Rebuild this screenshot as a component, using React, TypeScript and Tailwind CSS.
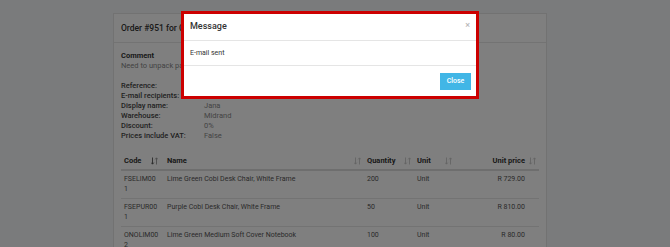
import _React from "react";

const rows = [
  { code: ["FSELIM00", "1"], name: "Lime Green Cobi Desk Chair, White Frame", qty: "200", unit: "Unit", price: "R 729.00" },
  { code: ["FSEPUR00", "1"], name: "Purple Cobi Desk Chair, White Frame", qty: "50", unit: "Unit", price: "R 810.00" },
  { code: ["ONOLIM00", "2"], name: "Lime Green Medium Soft Cover Notebook", qty: "100", unit: "Unit", price: "R 80.00" },
];

const details = [
  ["Reference:", ""],
  ["E-mail recipients:", ""],
  ["Display name:", "Jana"],
  ["Warehouse:", "Midrand"],
  ["Discount:", "0%"],
  ["Prices include VAT:", "False"],
];

const SortIcon = ({ active }: { active?: boolean }) => (
  <svg width="7" height="8" viewBox="0 0 7 8" className="shrink-0">
    {/* down arrow */}
    <path d="M1.5 0.5V7M0.2 5.6L1.5 7.2L2.8 5.6" fill="none" stroke={active ? "#555" : "#c8c8c8"} strokeWidth="0.9" />
    {/* up arrow */}
    <path d="M5.5 7.5V1M4.2 2.4L5.5 0.8L6.8 2.4" fill="none" stroke={active ? "#999" : "#c8c8c8"} strokeWidth="0.9" />
  </svg>
);

const App = () => {
  return (
    <div className="relative h-[247px] w-[670px] overflow-hidden bg-[#f5f6f8] font-['Roboto',sans-serif] text-[#333]">
      {/* Order card */}
      <div className="ml-[113px] mt-[13px] w-[434px] border border-[#e4e4e4] bg-white">
        <div className="flex h-[29px] items-center border-b border-[#e6e6e6] px-[7px] text-[8.5px] font-medium">
          Order #951 for C
        </div>
        <div className="px-[7px] pt-[8px] text-[7.5px] leading-[10px]">
          <div className="font-bold">Comment</div>
          <div className="text-[#888]">Need to unpack pallets on arrival</div>
          <div className="mt-[10px] grid grid-cols-[83px_1fr]">
            {details.map(([label, value]) => (
              <div key={label} className="contents">
                <div className="font-medium text-[#444]">{label}</div>
                <div className="text-[#888]">{value}</div>
              </div>
            ))}
          </div>
          {/* Table */}
          <div className="mt-[12px] w-[418px]">
            <div className="grid h-[18px] grid-cols-[43px_200px_50px_41px_84px] items-center border-b-2 border-[#ddd] font-bold text-[#333]">
              <div className="flex items-center justify-between px-[3px] pr-[6px]">
                Code <SortIcon active />
              </div>
              <div className="flex items-center justify-between px-[3px]">
                Name <SortIcon />
              </div>
              <div className="flex items-center justify-between px-[3px]">
                Quantity <SortIcon />
              </div>
              <div className="flex items-center justify-between px-[3px]">
                Unit <SortIcon />
              </div>
              <div className="flex items-center justify-end gap-[4px] px-[3px]">
                Unit price <SortIcon />
              </div>
            </div>
            {rows.map((r) => (
              <div
                key={r.code[0]}
                className="grid h-[28px] grid-cols-[43px_200px_50px_41px_84px] items-start border-b border-[#e6e6e6] pt-[3px] text-[7px] text-[#555]"
              >
                <div className="px-[3px]">
                  {r.code[0]}
                  <br />
                  {r.code[1]}
                </div>
                <div className="px-[3px]">{r.name}</div>
                <div className="px-[3px]">{r.qty}</div>
                <div className="px-[3px]">{r.unit}</div>
                <div className="pr-[14px] text-right">{r.price}</div>
              </div>
            ))}
          </div>
        </div>
      </div>

      {/* Backdrop */}
      <div className="absolute inset-0 bg-black/50" />

      {/* Message modal */}
      <div className="absolute left-[181px] top-[11px] w-[298px] border-[3px] border-[#cc0000] bg-white">
        <div className="relative flex h-[27px] items-center border-b border-[#e5e5e5] px-[6px] text-[9px] font-medium text-[#333]">
          Message
          <span className="absolute right-[6px] top-[7px] text-[9px] leading-none text-[#bbb]">×</span>
        </div>
        <div className="flex h-[25px] items-center border-b border-[#e5e5e5] px-[6px] text-[7px] text-[#333]">
          E-mail sent
        </div>
        <div className="flex h-[30px] items-center justify-end px-[5px]">
          <button className="h-[17px] w-[31px] bg-[#41b6e6] text-[7px] font-medium text-white">Close</button>
        </div>
      </div>
    </div>
  );
};

export default App;
